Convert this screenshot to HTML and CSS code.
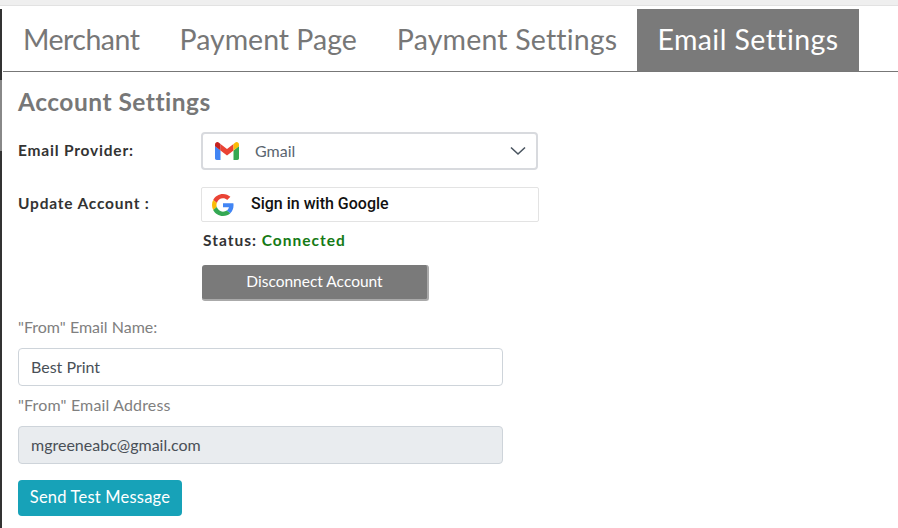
FILE: index.html
```html
<!DOCTYPE html>
<html lang="en">
<head>
<meta charset="utf-8">
<title>Email Settings</title>
<link rel="stylesheet" href="styles.css">
</head>
<body>
<div class="topstrip"></div>
<div class="page">
  <div class="rail"><div class="rail-thumb"></div></div>
  <div class="panel">
    <nav class="tabs">
      <a class="tab tab-merchant">Merchant</a>
      <a class="tab tab-page">Payment Page</a>
      <a class="tab tab-settings">Payment Settings</a>
      <a class="tab tab-email active">Email Settings</a>
    </nav>
    <main class="content">
      <h2 class="title">Account Settings</h2>
      <div class="row provider-row">
        <label class="row-label">Email Provider:</label>
        <div class="select">
          <svg class="gmail" width="24" height="18" viewBox="0 0 24 18">
            <path d="M0 4v12.300C0 17.200.8 18 1.700 18h3.800V8.600z" fill="#4285f4"/>
            <path d="M24 4v12.300c0 .9-.8 1.700-1.700 1.700h-3.800V8.600z" fill="#34a853"/>
            <path d="M5.500 8.600 L12 13.500 L18.500 8.600 V2 L12 7 L5.500 2z" fill="#ea4335"/>
            <path d="M0 4.200V2.600C0 .6 2.300-.7 4 .7L5.500 2v6.600z" fill="#c5221f"/>
            <path d="M24 4.200V2.600C24 .6 21.700-.7 20 .7L18.500 2v6.600z" fill="#fbbc04"/>
          </svg>
          <span class="select-value">Gmail</span>
          <svg class="chev" width="16" height="10" viewBox="0 0 16 10"><path d="M1 1.500l7 6.500 7-6.500" fill="none" stroke="#4a5560" stroke-width="1.600"/></svg>
        </div>
      </div>
      <div class="row account-row">
        <label class="row-label">Update Account :</label>
        <div class="account-col">
          <div class="google-btn">
            <svg width="22" height="22" viewBox="0 0 48 48">
              <path fill="#ea4335" d="M24 9.500c3.500 0 6.700 1.200 9.200 3.600l6.900-6.900C35.900 2.400 30.500 0 24 0 14.600 0 6.500 5.400 2.600 13.200l8 6.200C12.400 13.700 17.700 9.500 24 9.500z"/>
              <path fill="#4285f4" d="M47 24.500c0-1.600-.1-3.100-.4-4.500H24v9h12.900c-.6 3-2.200 5.500-4.800 7.200l7.700 6c4.500-4.200 7.200-10.300 7.200-17.700z"/>
              <path fill="#fbbc05" d="M10.500 28.600c-.5-1.400-.8-3-.8-4.600s.3-3.200.8-4.600l-8-6.200C.9 16.500 0 20.100 0 24s.9 7.500 2.600 10.800z"/>
              <path fill="#34a853" d="M24 48c6.500 0 11.900-2.100 15.900-5.800l-7.700-6c-2.200 1.400-4.900 2.300-8.200 2.300-6.300 0-11.600-4.200-13.500-9.900l-8 6.200C6.500 42.600 14.600 48 24 48z"/>
            </svg>
            <span class="google-text">Sign in with Google</span>
          </div>
          <div class="status">Status: <span class="connected">Connected</span></div>
          <button class="disconnect">Disconnect Account</button>
        </div>
      </div>
      <div class="field-label first">"From" Email Name:</div>
      <div class="input">Best Print</div>
      <div class="field-label second">"From" Email Address</div>
      <div class="input disabled">mgreeneabc@gmail.com</div>
      <button class="send">Send Test Message</button>
    </main>
  </div>
</div>
</body>
</html>
```
FILE: styles.css
```css
* { box-sizing: border-box; }
html, body { margin: 0; padding: 0; }
body {
  width: 898px;
  height: 528px;
  overflow: hidden;
  background: #fff;
  font-family: "Lato", "Open Sans", sans-serif;
  color: #777;
}
.topstrip {
  height: 6px;
  background: #efefef;
  border-bottom: 1px solid #e2e2e2;
}
.page {
  display: flex;
  margin-top: 3px;
  height: 519px;
}
.rail {
  flex: none;
  width: 2px;
  background: #333;
}
.rail-thumb {
  margin-top: 71px;
  height: 71px;
  background: #888;
}
.panel {
  flex: 1;
  min-width: 0;
  padding-left: 1px;
}
.tabs {
  display: flex;
  height: 63px;
  border-bottom: 1px solid #777;
}
.tab {
  height: 62px;
  padding: 0 20px;
  font-size: 28.500px;
  line-height: 60px;
  color: #777;
  white-space: nowrap;
}
.tab-merchant { letter-spacing: -.5px; }
.tab-settings { letter-spacing: .19px; }
.tab-email { letter-spacing: .43px; }
.tab.active { background: #7a7a7a; color: #fff; }
.content { padding-left: 15px; }
.title {
  margin: 0;
  padding-top: 16px;
  height: 60px;
  font-size: 24.500px;
  line-height: 28px;
  font-weight: 700;
  letter-spacing: .5px;
  color: #777;
}
.row { display: flex; }
.row-label {
  width: 183px;
  font-size: 15.500px;
  font-weight: 700;
  color: #333;
  letter-spacing: .8px;
}
.provider-row { height: 55px; }
.provider-row .row-label { line-height: 36px; }
.select {
  width: 337px;
  height: 38px;
  display: flex;
  align-items: center;
  background: #fff;
  border: 2px solid #d8dade;
  border-radius: 4px;
  padding: 0 10px 2px 12px;
}
.gmail { flex: none; margin-top: 2px; }
.select-value { margin-left: 16px; font-size: 16px; color: #5a6570; flex: 1; }
.chev { flex: none; margin-top: 2px; }
.account-row .row-label { line-height: 32px; }
.account-col { width: 338px; }
.google-btn {
  height: 35px;
  display: flex;
  align-items: center;
  gap: 17px;
  padding-left: 10px;
  border: 1px solid #e3e3e3;
  border-radius: 2px;
}
.google-text {
  font-family: "Roboto", sans-serif;
  font-size: 16px;
  font-weight: 500;
  line-height: 20px;
  margin-bottom: 2px;
  color: #111;
}
.status {
  margin: 8px 0 0 2px;
  height: 20px;
  font-size: 15.500px;
  line-height: 20px;
  font-weight: 700;
  color: #333;
  letter-spacing: 1px;
}
.connected { color: #157a15; }
.disconnect {
  display: block;
  margin: 15px 0 0 1px;
  width: 227px;
  height: 36px;
  padding: 0 0 2px;
  background: #7a7a7a;
  color: #fff;
  font: 400 15.500px "Lato", sans-serif;
  border: 0;
  border-right: 2px solid #aaa;
  border-bottom: 2px solid #aaa;
  border-radius: 3px;
}
.field-label { font-size: 16px; line-height: 20px; color: #808080; }
.field-label.first { margin-top: 16px; }
.field-label.second { margin-top: 9px; letter-spacing: .15px; }
.input {
  width: 485px;
  height: 38px;
  margin-top: 11px;
  padding: 0 12px;
  border: 1px solid #ced4da;
  border-radius: 4px;
  font-size: 16px;
  line-height: 35px;
  color: #495057;
  background: #fff;
}
.input.disabled { background: #e9ecef; }
.send {
  display: block;
  margin-top: 16px;
  width: 164px;
  height: 36px;
  padding: 0 0 2px;
  background: #17a2b8;
  color: #fff;
  font: 400 16.500px "Lato", sans-serif;
  letter-spacing: .2px;
  border: 0;
  border-radius: 4px;
}
```
